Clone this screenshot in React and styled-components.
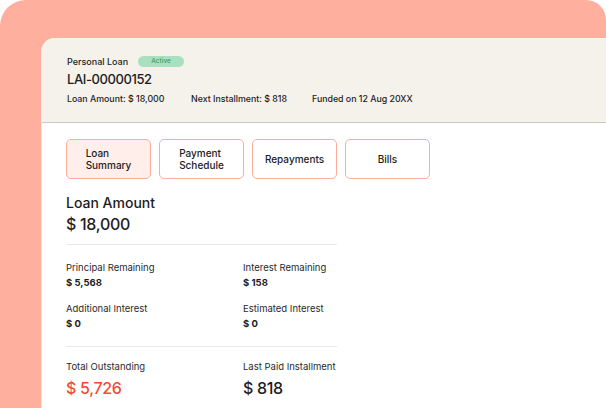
import React from 'react';
import styled, { createGlobalStyle } from 'styled-components';

const GlobalStyle = createGlobalStyle`
  html, body {
    margin: 0;
    padding: 0;
    background: #ffffff;
  }
  body {
    font-family: Inter, "Noto Sans", sans-serif;
    color: #1c1c1c;
  }
`;

const Backdrop = styled.div`
  width: 606px;
  height: 408px;
  box-sizing: border-box;
  background: #ffaf9e;
  border-radius: 26px 20px 0 0;
  padding: 38px 0 0 41px;
  overflow: hidden;
`;

const Card = styled.div`
  width: 600px;
  height: 400px;
  background: #ffffff;
  border-radius: 14px 0 0 0;
  border-left: 1px solid #ececec;
  overflow: hidden;
`;

const Header = styled.div`
  background: #f5f2ec;
  padding: 16px 25px 17px;
  border-bottom: 1px solid #cdc9c1;
`;

const TitleRow = styled.div`
  display: flex;
  align-items: center;
  gap: 10px;
  height: 14px;
`;

const Product = styled.span`
  font-size: 9px;
  font-weight: 500;
  color: #1c1c1c;
`;

const Badge = styled.span`
  display: inline-flex;
  align-items: center;
  justify-content: center;
  width: 46px;
  height: 11px;
  border-radius: 6px;
  background: #a9e1c0;
  color: #3d9a61;
  font-size: 6.5px;
  font-weight: 500;
`;

const LoanId = styled.div`
  margin-top: 2px;
  font-size: 13px;
  line-height: 18px;
  font-weight: 500;
  letter-spacing: -0.4px;
`;

const MetaRow = styled.div`
  display: flex;
  margin-top: 5px;
  font-size: 8.8px;
  line-height: 12px;
  font-weight: 500;
  white-space: nowrap;
`;

const MetaItem = styled.span`
  width: ${p => (p.w ? `${p.w}px` : 'auto')};
  flex: none;
`;

const Body = styled.div`
  padding: 16px 24px 0;
`;

const Tabs = styled.div`
  display: flex;
  gap: 8px;
`;

const Tab = styled.div`
  width: 85px;
  height: 40px;
  box-sizing: border-box;
  display: flex;
  align-items: center;
  justify-content: center;
  border: 1px solid #fbae9d;
  border-radius: 5px;
  background: ${p => (p.active ? '#ffeeea' : '#ffffff')};
  font-size: 10px;
  line-height: 12px;
  font-weight: 500;
  color: #1c1c1c;
`;

const TabLabel = styled.span`
  width: min-content;
  text-align: left;
`;

const SectionTitle = styled.div`
  margin-top: 15px;
  font-size: 14px;
  line-height: 18px;
  font-weight: 500;
`;

const BigValue = styled.div`
  margin-top: ${p => p.gap || 0}px;
  font-size: 16px;
  line-height: 22px;
  font-weight: 500;
  letter-spacing: -0.3px;
  color: ${p => (p.accent ? '#f24b33' : '#1c1c1c')};
`;

const Divider = styled.div`
  width: 271px;
  height: 1px;
  background: #e9e9e9;
  margin-top: ${p => p.top}px;
`;

const Grid = styled.div`
  display: grid;
  grid-template-columns: 177px 100px;
  row-gap: ${p => p.rowGap || 0}px;
  margin-top: ${p => p.top}px;
`;

const Stat = styled.div`
  display: flex;
  flex-direction: column;
`;

const StatLabel = styled.span`
  font-size: 9.5px;
  line-height: 13px;
  color: #2a2a2a;
  white-space: nowrap;
`;

const StatValue = styled.span`
  margin-top: 3px;
  font-size: 9.5px;
  line-height: 12px;
  font-weight: 700;
`;

const tabs = ['Loan Summary', 'Payment Schedule', 'Repayments', 'Bills'];

const details = [
  { label: 'Principal Remaining', value: '$ 5,568' },
  { label: 'Interest Remaining', value: '$ 158' },
  { label: 'Additional Interest', value: '$ 0' },
  { label: 'Estimated Interest', value: '$ 0' },
];

export default function App() {
  return (
    <>
      <GlobalStyle />
      <Backdrop>
        <Card>
          <Header>
            <TitleRow>
              <Product>Personal Loan</Product>
              <Badge>Active</Badge>
            </TitleRow>
            <LoanId>LAI-00000152</LoanId>
            <MetaRow>
              <MetaItem w={124}>Loan Amount: $ 18,000</MetaItem>
              <MetaItem w={121}>Next Installment: $ 818</MetaItem>
              <MetaItem>Funded on 12 Aug 20XX</MetaItem>
            </MetaRow>
          </Header>

          <Body>
            <Tabs>
              {tabs.map((t, i) => (
                <Tab key={t} active={i === 0}>
                  <TabLabel>{t}</TabLabel>
                </Tab>
              ))}
            </Tabs>

            <SectionTitle>Loan Amount</SectionTitle>
            <BigValue gap={1}>$ 18,000</BigValue>

            <Divider top={9} />

            <Grid top={16} rowGap={13}>
              {details.map(d => (
                <Stat key={d.label}>
                  <StatLabel>{d.label}</StatLabel>
                  <StatValue>{d.value}</StatValue>
                </Stat>
              ))}
            </Grid>

            <Divider top={16} />

            <Grid top={13}>
              <Stat>
                <StatLabel>Total Outstanding</StatLabel>
                <BigValue gap={4} accent>$ 5,726</BigValue>
              </Stat>
              <Stat>
                <StatLabel>Last Paid Installment</StatLabel>
                <BigValue gap={4}>$ 818</BigValue>
              </Stat>
            </Grid>
          </Body>
        </Card>
      </Backdrop>
    </>
  );
}
